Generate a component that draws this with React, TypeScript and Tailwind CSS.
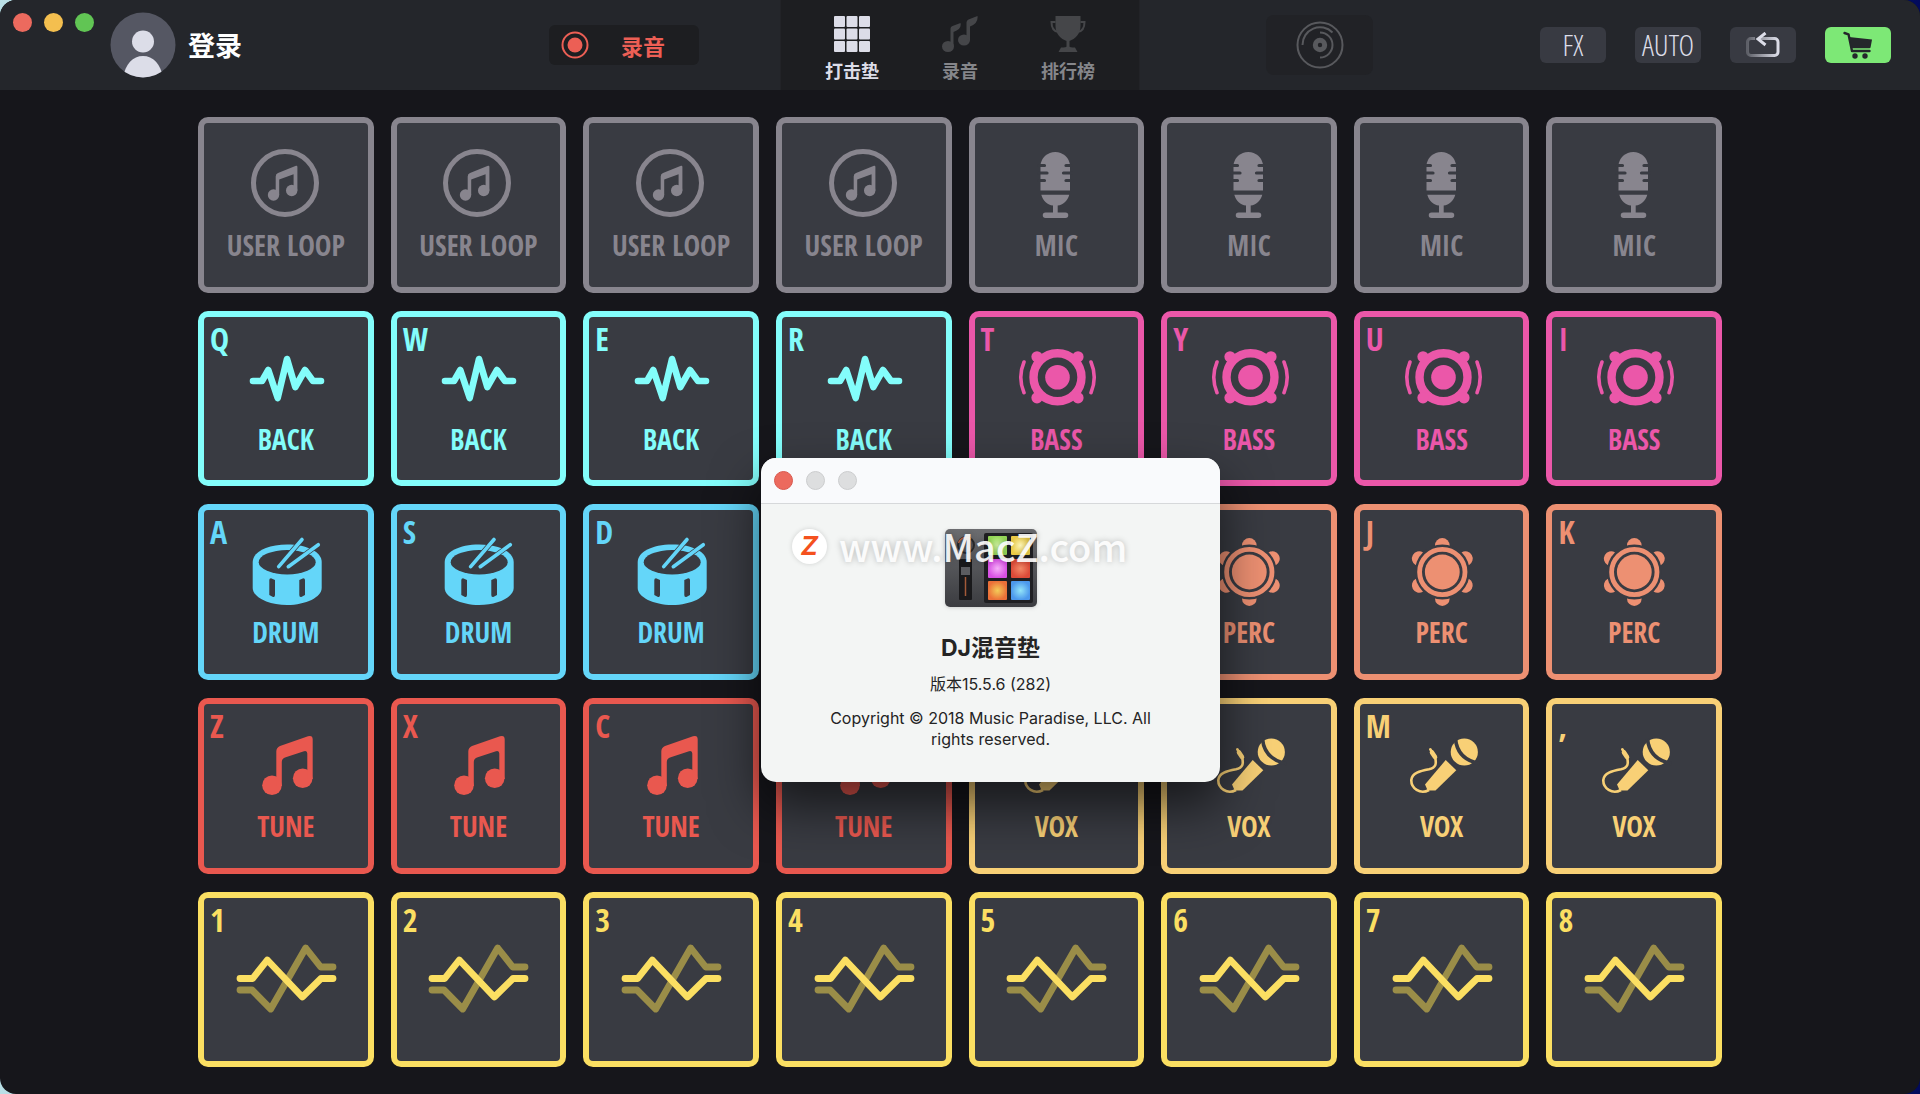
import React from "react";

type Kind = "loop" | "mic" | "back" | "bass" | "drum" | "perc" | "tune" | "vox" | "fx";

const LABELS: Record<Kind, string> = {
  loop: "USER LOOP",
  mic: "MIC",
  back: "BACK",
  bass: "BASS",
  drum: "DRUM",
  perc: "PERC",
  tune: "TUNE",
  vox: "VOX",
  fx: "",
};

const COLORS: Record<Kind, string> = {
  loop: "border-[#88858e] text-[#88858e]",
  mic: "border-[#88858e] text-[#88858e]",
  back: "border-[#83fdfb] text-[#83fdfb]",
  bass: "border-[#eb57a9] text-[#eb57a9]",
  drum: "border-[#64d6f9] text-[#64d6f9]",
  perc: "border-[#ed9072] text-[#ed9072]",
  tune: "border-[#e9584f] text-[#e9584f]",
  vox: "border-[#f8d076] text-[#f8d076]",
  fx: "border-[#fbdf62] text-[#fbdf62]",
};

const ROWS: [Kind, string][][] = [
  [["loop", ""], ["loop", ""], ["loop", ""], ["loop", ""], ["mic", ""], ["mic", ""], ["mic", ""], ["mic", ""]],
  [["back", "Q"], ["back", "W"], ["back", "E"], ["back", "R"], ["bass", "T"], ["bass", "Y"], ["bass", "U"], ["bass", "I"]],
  [["drum", "A"], ["drum", "S"], ["drum", "D"], ["drum", ""], ["perc", ""], ["perc", ""], ["perc", "J"], ["perc", "K"]],
  [["tune", "Z"], ["tune", "X"], ["tune", "C"], ["tune", ""], ["vox", ""], ["vox", ""], ["vox", "M"], ["vox", ","]],
  [["fx", "1"], ["fx", "2"], ["fx", "3"], ["fx", "4"], ["fx", "5"], ["fx", "6"], ["fx", "7"], ["fx", "8"]],
];

const PAD_BG = "#393b42";

function PadIcon({ kind }: { kind: Kind }) {
  switch (kind) {
    case "loop":
      return (
        <g>
          <circle cx="59" cy="40" r="31.5" fill="none" stroke="currentColor" strokeWidth="5" />
          <circle cx="47.5" cy="52" r="5.7" />
          <circle cx="65.7" cy="47.5" r="5.7" />
          <path d="M49.7 52V33.5Q49.7 31 52 30.1L70 22.8Q71.4 22.4 71.4 24V47.5H67.6V31.2L53.2 36.6V52Z" />
        </g>
      );
    case "mic":
      return (
        <g>
          <path d="M44.5 47.5V22.5A14.8 14.8 0 0 1 74 22.5V47.5Z" />
          <path
            d="M43 22.5H48.5M43 30H51M43 37.5H48.5M75.5 22.5H70M75.5 30H67.5M75.5 37.5H70"
            stroke={PAD_BG}
            strokeWidth="3.2"
            strokeLinecap="round"
          />
          <path d="M45.3 51.7H73.3C71.5 58 67 62 61.7 62.6V69.5H69.5A2.7 2.7 0 0 1 69.5 75H49.5A2.7 2.7 0 0 1 49.5 69.5H57V62.6C51.5 62 47 58 45.3 51.7Z" />
        </g>
      );
    case "back":
      return (
        <polyline
          points="27,44 36,44 42.3,33 51.7,61 61,22 69.3,50 79,33 87,44 95,44"
          fill="none"
          stroke="currentColor"
          strokeWidth="6.6"
          strokeLinecap="round"
          strokeLinejoin="round"
        />
      );
    case "bass":
      return (
        <g>
          <circle cx="61.5" cy="40.3" r="24" fill="none" stroke="currentColor" strokeWidth="8.4" />
          <circle cx="61.5" cy="40.3" r="12.3" />
          {[-20.5, 20.5].map((dx) =>
            [-20.5, 20.5].map((dy) => <circle key={`${dx}${dy}`} cx={61.5 + dx} cy={40.3 + dy} r="5.6" />),
          )}
          <path
            d="M28 25Q21.5 40.3 28 55.7M95 25Q101.5 40.3 95 55.7"
            fill="none"
            stroke="currentColor"
            strokeWidth="3.6"
            strokeLinecap="round"
          />
        </g>
      );
    case "drum":
      return (
        <g>
          <path d="M26.7 32C26.7 22 41 14.5 61.2 14.5S95.7 22 95.7 32V58C95.7 67 80 75 61.2 75S26.7 67 26.7 58Z" />
          <ellipse cx="61.2" cy="32.2" rx="28.5" ry="12.2" fill={PAD_BG} />
          <path d="M76 9.5L52.7 36.7M92.3 14.7L62.3 36.7" stroke={PAD_BG} strokeWidth="5" />
          <path d="M76 9.5L52.7 36.7M92.3 14.7L62.3 36.7" stroke="currentColor" strokeWidth="3.6" strokeLinecap="round" />
          <path
            d="M43.3 50Q43.3 48.3 45 48.3L49 50V65Q49 67.5 47 67L43.3 65ZM79 50Q79 48.3 77.3 48.3L73.3 50V65Q73.3 67.5 75.3 67L79 65Z"
            fill={PAD_BG}
          />
        </g>
      );
    case "perc":
      return (
        <g>
          {[0, 60, 120, 180, 240, 300].map((a) => (
            <circle key={a} cx="60.3" cy="15.3" r="7.3" transform={`rotate(${a} 60.3 42)`} />
          ))}
          <circle cx="60.3" cy="42" r="27.5" fill={PAD_BG} />
          <circle cx="60.3" cy="42" r="22.7" fill="none" stroke="currentColor" strokeWidth="4.8" />
          <circle cx="60.3" cy="42" r="17.4" />
        </g>
      );
    case "tune":
      return (
        <g>
          <circle cx="46" cy="61.3" r="9.8" />
          <circle cx="76.7" cy="54.3" r="9.8" />
          <path d="M50.3 62V27.5Q50.3 23.5 54 22L82 12.3Q86.7 11 86.7 15.5V55H81.3V29.5Q81.3 26.3 78 27.2L59 33.5Q55.8 34.8 55.8 38V62Z" />
        </g>
      );
    case "vox":
      return (
        <g>
          <circle cx="82.3" cy="28" r="13.6" />
          <path d="M73.5 15Q75.5 35.5 97.5 39.5" fill="none" stroke={PAD_BG} strokeWidth="3.6" />
          <path d="M63.7 36L74.3 46.3L53.5 66.5L45.7 66.5L43 60.5Z" />
          <path
            d="M47 66C38 71 29 64 29.3 56C30 49 38 47 47 45.3C54 43.5 54.5 40 53.3 34L50 28"
            fill="none"
            stroke="currentColor"
            strokeWidth="2.6"
          />
          <path d="M50 28.5L53 33" stroke="currentColor" strokeWidth="4.6" strokeLinecap="round" />
          <path d="M48.3 25.3L50 28" stroke="currentColor" strokeWidth="2.6" strokeLinecap="round" />
        </g>
      );
    case "fx":
      return (
        <g fill="none" stroke="currentColor" strokeWidth="6.8" strokeLinecap="round" strokeLinejoin="round">
          <polyline points="14,72 26,72 44.7,91 79.7,30 94.7,49 107,49" className="stroke-[#9a8d48]" />
          <polyline points="14,60.5 26.7,60.5 41.3,42 76.3,79 95,60.5 107,60.5" />
        </g>
      );
  }
}

function Pad({ kind, keyName }: { kind: Kind; keyName: string }) {
  return (
    <button
      type="button"
      aria-label={`${LABELS[kind] || "FX"} ${keyName}`.trim()}
      className={`relative flex aspect-square flex-col items-center rounded-[10px] border-6 bg-[#393b42] pt-5 font-['Open_Sans_Condensed',sans-serif] font-bold ${COLORS[kind]}`}
    >
      {keyName && <span className="absolute top-0 left-1.5 text-[32px] leading-[44px]">{keyName}</span>}
      <svg
        viewBox={kind === "fx" ? "0 0 120 110" : "0 0 120 80"}
        className={kind === "fx" ? "h-[110px] w-[120px] shrink-0" : "h-[80px] w-[120px] shrink-0"}
        fill="currentColor"
        aria-hidden="true"
      >
        <PadIcon kind={kind} />
      </svg>
      {LABELS[kind] && <span className="text-[28px] leading-[44px] whitespace-nowrap">{LABELS[kind]}</span>}
    </button>
  );
}

function Tab({ label, active, children }: { label: string; active?: boolean; children: React.ReactNode }) {
  return (
    <button
      type="button"
      className={`flex w-[108px] flex-col items-center gap-[3px] pt-4 text-[18px] leading-[30px] font-bold ${active ? "text-[#dcdde8]" : "text-[#85868a]"}`}
    >
      <svg viewBox="0 0 36 36" className={`size-9 ${active ? "text-[#dcdde8]" : "text-[#454649]"}`} fill="currentColor" aria-hidden="true">
        {children}
      </svg>
      {label}
    </button>
  );
}

const TOOL = "flex h-9 w-[66px] items-center justify-center rounded-md";
const TOOL_TEXT =
  "bg-[#383a42] font-['Open_Sans_Condensed_Light','Open_Sans_Condensed',sans-serif] text-[30px] leading-9 font-light text-[#dcdde8]";

function Header() {
  return (
    <header className="grid h-[90px] grid-cols-[1fr_auto_1fr] bg-[#24262b]">
      <div className="flex items-center pr-[81px] pl-[13px]">
        <div className="flex gap-3 self-start pt-[13px]">
          <button type="button" aria-label="Close" className="size-[19px] rounded-full bg-[#ec6a5e]" />
          <button type="button" aria-label="Minimize" className="size-[19px] rounded-full bg-[#f4bf4f]" />
          <button type="button" aria-label="Zoom" className="size-[19px] rounded-full bg-[#61c554]" />
        </div>
        <button type="button" className="ml-4 flex items-center gap-3 text-[27px] leading-9 font-bold text-white">
          <svg viewBox="0 0 66 66" className="size-[66px]" aria-hidden="true">
            <clipPath id="avatar">
              <circle cx="33" cy="33" r="32.5" />
            </clipPath>
            <g clipPath="url(#avatar)">
              <rect width="66" height="66" fill="#555763" />
              <circle cx="33" cy="29.5" r="11" fill="#dcdde8" />
              <path d="M13 66C15 52 23 44 33 44S51 52 53 66Z" fill="#dcdde8" />
            </g>
          </svg>
          登录
        </button>
        <button
          type="button"
          className="ml-auto flex h-10 w-[150px] items-center rounded-md bg-[#1d1e21] pl-3 text-[22px] leading-8 font-bold text-[#ec5f55]"
        >
          <svg viewBox="0 0 28 28" className="mr-8 size-7" fill="currentColor" aria-hidden="true">
            <circle cx="14" cy="14" r="12.5" fill="none" stroke="currentColor" strokeWidth="2" />
            <circle cx="14" cy="14" r="7.5" />
          </svg>
          录音
        </button>
      </div>

      <nav className="flex border-x border-[#222327] bg-[#1d1e21] px-[17px]">
        <Tab label="打击垫" active>
          {[0, 12.5, 25].map((x) => [0, 12.5, 25].map((y) => <rect key={`${x}-${y}`} x={x} y={y} width="11" height="11" rx="1" />))}
        </Tab>
        <Tab label="录音">
          <ellipse cx="6" cy="30.5" rx="6" ry="5.5" />
          <ellipse cx="22" cy="24" rx="6" ry="5.5" />
          <path d="M8.5 30V12.5Q8.5 10.5 10.5 10L18.5 7Q20 13 11.5 16V31ZM24.5 23.5V6.5Q24.5 4.5 26.5 3.5L35.5 0Q36.5 7.5 28 10.5V24.5Z" />
        </Tab>
        <Tab label="排行榜">
          <path d="M5.5 0H30.5V10C30.5 18 25 23 19.5 25V30.5Q19.5 31.5 25 31.5L27.5 36H8.5L11 31.5Q16.5 31.5 16.5 30.5V25C11 23 5.5 18 5.5 10Z" />
          <path d="M5.5 6H1.5C1.5 12 4 15.5 8.5 16M30.5 6H34.5C34.5 12 32 15.5 27.5 16" fill="none" stroke="currentColor" strokeWidth="2" />
        </Tab>
      </nav>

      <div className="flex items-center gap-[29px] pr-[29px] pl-[126px]">
        <button type="button" aria-label="Turntable" className="mr-auto flex h-[60px] w-[107px] items-center justify-center rounded-lg bg-[#212226]">
          <svg viewBox="0 0 48 48" className="size-12" fill="none" stroke="#58595d" strokeWidth="2" aria-hidden="true">
            <circle cx="24" cy="24" r="22.5" />
            <path d="M6.5 24A17.5 17.5 0 0 1 36.5 11.5M24 11.5A12.5 12.5 0 0 1 24 36.5" />
            <circle cx="24" cy="24" r="4.7" strokeWidth="5" />
          </svg>
        </button>
        <button type="button" className={`${TOOL} ${TOOL_TEXT}`}>
          FX
        </button>
        <button type="button" className={`${TOOL} ${TOOL_TEXT}`}>
          AUTO
        </button>
        <button type="button" aria-label="Loop" className={`${TOOL} bg-[#383a42]`}>
          <svg viewBox="0 0 34 26" className="h-[26px] w-[34px]" fill="none" aria-hidden="true">
            <defs>
              <linearGradient id="loopFade" x1="0" y1="0" x2="1" y2="0">
                <stop offset="0" stopColor="#5e6068" />
                <stop offset="1" stopColor="#dcdde8" />
              </linearGradient>
            </defs>
            <path
              d="M9 6.5H5A3.5 3.5 0 0 0 1.5 10V20A3.5 3.5 0 0 0 5 23.5H28.5A3.5 3.5 0 0 0 32 20V10A3.5 3.5 0 0 0 28.5 6.5H14"
              stroke="url(#loopFade)"
              strokeWidth="3"
            />
            <path d="M19.5 1L12 7L19.5 13" stroke="#dcdde8" strokeWidth="3" />
          </svg>
        </button>
        <button type="button" aria-label="Shop" className={`${TOOL} bg-[#7de876]`}>
          <svg viewBox="0 0 30 28" className="h-7 w-[30px]" fill="#24262b" aria-hidden="true">
            <path d="M1.5 2L5.5 3.3L9 20H26.5" fill="none" stroke="#24262b" strokeWidth="2.4" strokeLinecap="round" strokeLinejoin="round" />
            <path d="M6 6L29 8.5L27.5 16.5Q27.3 17.2 26.5 17.2H8.5Z" />
            <circle cx="12" cy="25" r="2.7" />
            <circle cx="22" cy="25" r="2.7" />
          </svg>
        </button>
      </div>
    </header>
  );
}

const TILES: [number, number, string, string][] = [
  [43, 7, "#d3f5a4", "#96d858"],
  [66, 7, "#fdf6b8", "#efcf48"],
  [43, 30, "#f5aef8", "#d850e4"],
  [66, 30, "#f28a68", "#dd4a38"],
  [43, 52, "#f3cc58", "#ec7038"],
  [66, 52, "#92e4f8", "#4c98ec"],
];

function AppIcon() {
  return (
    <svg viewBox="0 0 92 78" className="h-[78px] w-[92px] drop-shadow" aria-hidden="true">
      <defs>
        <linearGradient id="body" x1="0" y1="0" x2="0" y2="1">
          <stop offset="0" stopColor="#6c6d70" />
          <stop offset="1" stopColor="#3b3c40" />
        </linearGradient>
        {TILES.map(([, , inner, outer], i) => (
          <radialGradient key={i} id={`tile${i}`}>
            <stop offset="0" stopColor={inner} />
            <stop offset="1" stopColor={outer} />
          </radialGradient>
        ))}
      </defs>
      <rect width="92" height="78" rx="5" fill="url(#body)" />
      <rect x="39" y="4" width="49" height="70" rx="2" fill="#1f1f22" />
      {TILES.map(([x, y], i) => (
        <rect key={i} x={x} y={y} width="19" height="19" rx="1" fill={`url(#tile${i})`} />
      ))}
      <circle cx="21" cy="16" r="8" fill="#55565a" stroke="#2a2a2c" strokeWidth="2" />
      <path d="M13.5 14A8 8 0 0 1 26 10" fill="none" stroke="#b5633f" strokeWidth="1.5" />
      <rect x="14" y="30" width="13" height="41" rx="1" fill="#19191b" />
      <path d="M20.5 48V67" stroke="#a35a38" strokeWidth="1.5" />
      <rect x="16" y="38" width="9" height="8" fill="#5b5c60" />
    </svg>
  );
}

function AboutWindow() {
  return (
    <section
      role="dialog"
      aria-labelledby="about-title"
      className="absolute top-[458px] left-[761px] w-[459px] overflow-hidden rounded-[15px] bg-[#f3f5f4] text-center font-['Inter','Noto_Sans_CJK_SC',sans-serif] text-[#242424] shadow-[0_24px_50px_rgba(0,0,0,0.6)]"
    >
      <div className="flex h-[46px] items-center gap-[13px] border-b border-[#d6d8da] bg-[#f9fafc] pl-[13px]">
        <button type="button" aria-label="Close about" className="size-[19px] rounded-full border border-[#d9584e] bg-[#ec6a5e]" />
        <button type="button" aria-label="Minimize about" className="size-[19px] rounded-full border border-[#cccdce] bg-[#dddedf]" />
        <button type="button" aria-label="Zoom about" className="size-[19px] rounded-full border border-[#cccdce] bg-[#dddedf]" />
      </div>
      <div className="flex flex-col items-center px-14 pt-[25px] pb-8">
        <AppIcon />
        <h1 id="about-title" className="mt-[25px] text-[23px] leading-8 font-bold">
          DJ混音垫
        </h1>
        <p className="mt-2 text-[16px] leading-6">版本15.5.6 (282)</p>
        <p className="mt-3 text-[16px] leading-[21px]">Copyright © 2018 Music Paradise, LLC. All rights reserved.</p>
      </div>
    </section>
  );
}

function Watermark() {
  return (
    <div className="pointer-events-none absolute top-[520px] left-[792px] flex items-center gap-3">
      <span className="flex size-[35px] items-center justify-center rounded-full bg-white font-['Inter',sans-serif] text-[26px] leading-none font-bold text-[#f4511e] italic shadow-[0_0_5px_rgba(0,0,0,0.15)]">
        Z
      </span>
      <span className="text-[38px] leading-[52px] font-medium text-white/90 [text-shadow:0_0_6px_rgba(0,0,0,0.25)]">www.MacZ.com</span>
    </div>
  );
}

export default function App() {
  return (
    <div className="bg-linear-to-r from-[#b9dfe6] to-[#020a5c] font-['Noto_Sans_CJK_SC',sans-serif]">
      <div className="relative min-h-screen overflow-hidden rounded-2xl bg-[#16161b]">
        <Header />
        <main className="mx-auto grid max-w-[1524px] grid-cols-8 gap-x-[17px] gap-y-[18px] pt-[27px] pb-[26px]">
          {ROWS.flat().map(([kind, keyName], i) => (
            <Pad key={i} kind={kind} keyName={keyName} />
          ))}
        </main>
        <AboutWindow />
        <Watermark />
      </div>
    </div>
  );
}
